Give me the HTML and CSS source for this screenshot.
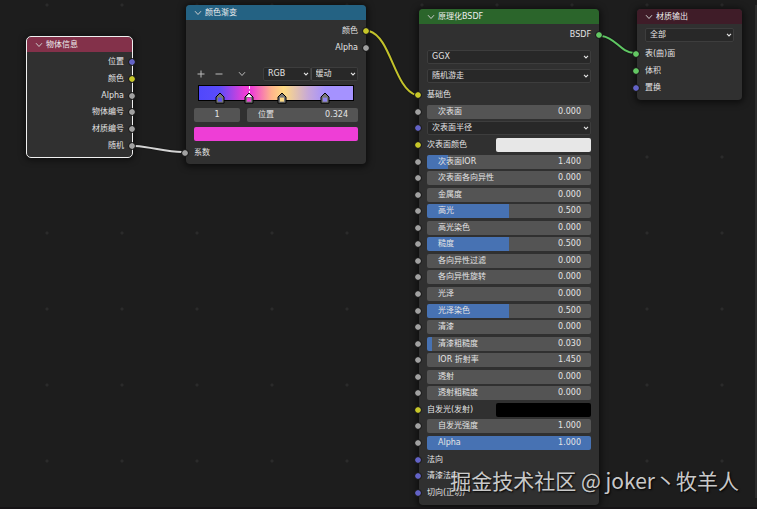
FILE: index.html
```
<!DOCTYPE html>
<html lang="zh-CN">
<head>
    <meta charset="UTF-8">
    <meta name="viewport" content="width=device-width, initial-scale=1.0">
    <title>材质节点</title>
    <link rel="stylesheet" href="styles.css">
</head>
<body>
    <svg class="symbols" width="0" height="0">
        <symbol id="chevron" viewBox="0 0 8 6"><path d="M1 1.2 4 4.5 7 1.2" fill="none" stroke="currentColor"/></symbol>
        <symbol id="arrow" viewBox="0 0 6 4"><path d="M1 0.8 3 2.9 5 0.8" fill="none" stroke="currentColor" stroke-width="1.1"/></symbol>
        <symbol id="stop" viewBox="0 0 10 12">
            <path d="M1 11.2V5L5 1 9 5v6.2z" fill="#777" stroke="#000"/>
            <path d="M3 5.6h4v4H3z" fill="currentColor"/>
        </symbol>
    </svg>

    <main class="canvas">
        <section class="node node-info selected">
            <header class="node-header red">
                <button class="collapse" aria-label="折叠"><svg class="chevron"><use href="#chevron"/></svg></button>
                <h2>物体信息</h2>
            </header>
            <div class="outputs">
                <div class="row out">位置<i class="socket vector"></i></div>
                <div class="row out">颜色<i class="socket color"></i></div>
                <div class="row out">Alpha<i class="socket"></i></div>
                <div class="row out">物体编号<i class="socket"></i></div>
                <div class="row out">材质编号<i class="socket"></i></div>
                <div class="row out">随机<i class="socket"></i></div>
            </div>
        </section>

        <section class="node node-ramp">
            <header class="node-header blue">
                <button class="collapse" aria-label="折叠"><svg class="chevron"><use href="#chevron"/></svg></button>
                <h2>颜色渐变</h2>
            </header>
            <div class="outputs">
                <div class="row out">颜色<i class="socket color"></i></div>
                <div class="row out">Alpha<i class="socket"></i></div>
            </div>
            <div class="ramp-body">
                <div class="toolbar">
                    <button class="tool" aria-label="添加"><svg viewBox="0 0 8 8"><path d="M4 0.5v7M0.5 4h7" stroke="currentColor"/></svg></button>
                    <button class="tool" aria-label="移除"><svg viewBox="0 0 8 8"><path d="M0.5 4h7" stroke="currentColor"/></svg></button>
                    <button class="tool menu" aria-label="工具"><svg class="chevron"><use href="#chevron"/></svg></button>
                    <div class="drop"><select aria-label="颜色模式"><option>RGB</option></select><svg><use href="#arrow"/></svg></div>
                    <div class="drop"><select aria-label="插值"><option>缓动</option></select><svg><use href="#arrow"/></svg></div>
                </div>
                <div class="ramp">
                    <svg class="stop" style="left: 13.5%; color: #5b55e8"><use href="#stop"/></svg>
                    <svg class="stop active" style="left: 32.4%; color: #ee3ed6" viewBox="0 0 10 12">
                        <path d="M1 11.2V5L5 1 9 5v6.2z" fill="#777" stroke="#000"/>
                        <path d="M2 5 5 1.8 8 5z" fill="#fff"/>
                        <path d="M3 5.6h4v4H3z" fill="currentColor"/>
                    </svg>
                    <svg class="stop" style="left: 54%; color: #ffdc84"><use href="#stop"/></svg>
                    <svg class="stop" style="left: 81.5%; color: #8f83f0"><use href="#stop"/></svg>
                </div>
                <div class="stop-fields">
                    <input class="index" type="text" value="1" aria-label="色标">
                    <label class="slider"><span>位置</span><input type="text" value="0.324"></label>
                </div>
                <input class="swatch" type="color" value="#ee3ed6" aria-label="色标颜色">
            </div>
            <div class="row in"><i class="socket"></i>系数</div>
        </section>

        <section class="node node-bsdf">
            <header class="node-header green">
                <button class="collapse" aria-label="折叠"><svg class="chevron"><use href="#chevron"/></svg></button>
                <h2>原理化BSDF</h2>
            </header>
            <div class="outputs">
                <div class="row out">BSDF<i class="socket shader"></i></div>
            </div>
            <div class="modes">
                <div class="drop"><select aria-label="分布"><option>GGX</option></select><svg><use href="#arrow"/></svg></div>
                <div class="drop"><select aria-label="次表面方法"><option>随机游走</option></select><svg><use href="#arrow"/></svg></div>
            </div>
            <div class="inputs">
                <div class="row in"><i class="socket color"></i>基础色</div>
                <div class="row in"><i class="socket"></i><label class="slider"><span>次表面</span><input type="text" value="0.000"></label></div>
                <div class="row in"><i class="socket vector"></i><div class="drop"><select aria-label="次表面半径"><option>次表面半径</option></select><svg><use href="#arrow"/></svg></div></div>
                <div class="row in"><i class="socket color"></i><label class="pick"><span>次表面颜色</span><input class="swatch" type="color" value="#e7e7e7"></label></div>
                <div class="row in"><i class="socket"></i><label class="slider" style="--fill: 13%"><span>次表面IOR</span><input type="text" value="1.400"></label></div>
                <div class="row in"><i class="socket"></i><label class="slider"><span>次表面各向异性</span><input type="text" value="0.000"></label></div>
                <div class="row in"><i class="socket"></i><label class="slider"><span>金属度</span><input type="text" value="0.000"></label></div>
                <div class="row in"><i class="socket"></i><label class="slider" style="--fill: 50%"><span>高光</span><input type="text" value="0.500"></label></div>
                <div class="row in"><i class="socket"></i><label class="slider"><span>高光染色</span><input type="text" value="0.000"></label></div>
                <div class="row in"><i class="socket"></i><label class="slider" style="--fill: 50%"><span>糙度</span><input type="text" value="0.500"></label></div>
                <div class="row in"><i class="socket"></i><label class="slider"><span>各向异性过滤</span><input type="text" value="0.000"></label></div>
                <div class="row in"><i class="socket"></i><label class="slider"><span>各向异性旋转</span><input type="text" value="0.000"></label></div>
                <div class="row in"><i class="socket"></i><label class="slider"><span>光泽</span><input type="text" value="0.000"></label></div>
                <div class="row in"><i class="socket"></i><label class="slider" style="--fill: 50%"><span>光泽染色</span><input type="text" value="0.500"></label></div>
                <div class="row in"><i class="socket"></i><label class="slider"><span>清漆</span><input type="text" value="0.000"></label></div>
                <div class="row in"><i class="socket"></i><label class="slider" style="--fill: 3%"><span>清漆粗糙度</span><input type="text" value="0.030"></label></div>
                <div class="row in"><i class="socket"></i><label class="slider"><span>IOR 折射率</span><input type="text" value="1.450"></label></div>
                <div class="row in"><i class="socket"></i><label class="slider"><span>透射</span><input type="text" value="0.000"></label></div>
                <div class="row in"><i class="socket"></i><label class="slider"><span>透射粗糙度</span><input type="text" value="0.000"></label></div>
                <div class="row in"><i class="socket color"></i><label class="pick"><span>自发光(发射)</span><input class="swatch" type="color" value="#000000"></label></div>
                <div class="row in"><i class="socket"></i><label class="slider"><span>自发光强度</span><input type="text" value="1.000"></label></div>
                <div class="row in"><i class="socket"></i><label class="slider" style="--fill: 100%"><span>Alpha</span><input type="text" value="1.000"></label></div>
                <div class="row in"><i class="socket vector"></i>法向</div>
                <div class="row in"><i class="socket vector"></i>清漆法向</div>
                <div class="row in"><i class="socket vector"></i>切向(正切)</div>
            </div>
        </section>

        <section class="node node-output">
            <header class="node-header maroon">
                <button class="collapse" aria-label="折叠"><svg class="chevron"><use href="#chevron"/></svg></button>
                <h2>材质输出</h2>
            </header>
            <div class="modes">
                <div class="drop"><select aria-label="目标"><option>全部</option></select><svg><use href="#arrow"/></svg></div>
            </div>
            <div class="outputs">
                <div class="row in"><i class="socket shader"></i>表(曲)面</div>
                <div class="row in"><i class="socket shader"></i>体积</div>
                <div class="row in"><i class="socket vector"></i>置换</div>
            </div>
        </section>

        <!-- links between sockets -->
        <svg class="links">
            <g class="casing">
                <path d="M135 146C152 147 166 152 182 152"/>
                <path d="M369 31C391 37 394 88 416 95"/>
                <path d="M602 36C616 38 620 52 634 53"/>
            </g>
            <path d="M135 146C152 147 166 152 182 152" stroke="#d4d4d4"/>
            <path d="M369 31C391 37 394 88 416 95" stroke="#c3c32b"/>
            <path d="M602 36C616 38 620 52 634 53" stroke="#5fc763"/>
        </svg>

        <p class="watermark">掘金技术社区 @ joker丶牧羊人</p>
    </main>
</body>
</html>
```
FILE: styles.css
```
* {
    box-sizing: border-box;
}
body {
    margin: 0;
    background: #1d1d1d;
    color: #e4e4e4;
    font: 8px/12px "DejaVu Sans", "Noto Sans CJK SC", sans-serif;
}
button, input, select {
    margin: 0;
    padding: 0;
    border: 0;
    background: none;
    color: inherit;
    font: inherit;
    appearance: none;
}
.symbols {
    position: absolute;
}
.canvas {
    position: relative;
    min-height: 100vh;
    overflow: hidden;
    background: radial-gradient(circle at 47px 5px, #2b2b2b 1px, transparent 2px) 0 0 / 75px 76px;
    border-bottom: 2px solid #161416;
}
/* edge of the side panel */
.canvas::after {
    content: "";
    position: absolute;
    top: 5px;
    right: 0;
    bottom: 9px;
    width: 2px;
    background: #2c2c2c;
}

/* nodes */
.node {
    position: absolute;
    background: #303030;
    border-radius: 4px;
    box-shadow: 0 1px 6px 2px rgba(0, 0, 0, 0.55);
}
.node-info {
    left: 27px;
    top: 37px;
    width: 105px;
    padding-bottom: 3px;
}
.node-ramp {
    left: 186px;
    top: 5px;
    width: 180px;
    padding-bottom: 3px;
}
.node-bsdf {
    left: 419px;
    top: 9px;
    width: 180px;
    padding-bottom: 4px;
}
.node-output {
    left: 637px;
    top: 9px;
    width: 105px;
    padding-bottom: 4px;
}
.selected {
    outline: 1px solid #f0f0f0;
}
.node-header {
    display: flex;
    align-items: center;
    height: 15px;
    padding-left: 8px;
    border-radius: 4px 4px 0 0;
}
.node-header h2 {
    margin: 0 0 0 3px;
    font-size: 8px;
    font-weight: normal;
    color: #eee;
}
.red { background: #83314a; }
.blue { background: #246283; }
.green { background: #2b652b; }
.maroon { background: #3f1c28; }
.collapse {
    display: flex;
    color: #ccc;
}
.chevron {
    width: 8px;
    height: 6px;
}

/* rows and sockets */
.row {
    position: relative;
    display: flex;
    align-items: center;
    padding: 0 8px;
}
.outputs {
    display: grid;
    grid-auto-rows: 17px;
    padding-top: 2px;
}
.node-info .outputs {
    grid-auto-rows: 1fr;
    height: 102px;
}
.out {
    justify-content: flex-end;
}
.socket {
    position: absolute;
    left: -5px;
    width: 8px;
    height: 8px;
    border: 1px solid #1c1c1c;
    border-radius: 50%;
    background: #a1a1a1;
    background-clip: padding-box;
    z-index: 1;
}
.out .socket {
    left: auto;
    right: -4px;
}
.vector { background-color: #6363c7; }
.color { background-color: #c7c729; }
.shader { background-color: #63c763; }

/* controls */
.drop {
    display: grid;
    align-items: center;
    flex: 1;
    min-width: 0;
    height: 14px;
    background: #282828;
    border: 1px solid #3d3d3d;
    border-radius: 2px;
}
.drop select {
    grid-area: 1 / 1;
    width: 100%;
    padding-left: 4px;
}
.drop svg {
    grid-area: 1 / 1;
    justify-self: end;
    width: 6px;
    height: 4px;
    margin-right: 1px;
    pointer-events: none;
}
.slider {
    --fill: 0%;
    display: flex;
    align-items: center;
    flex: 1;
    min-width: 0;
    height: 14px;
    padding: 0 10px 0 11px;
    background: linear-gradient(to right, #4772b3 var(--fill), #545454 var(--fill));
    border-radius: 2px;
}
.slider span {
    white-space: nowrap;
}
.slider input {
    flex: 1;
    min-width: 0;
    text-align: right;
}
.pick {
    display: flex;
    align-items: center;
    justify-content: space-between;
    flex: 1;
    min-width: 0;
}
.swatch {
    display: block;
    width: 100%;
    height: 14px;
    border-radius: 2px;
    overflow: hidden;
}
.pick .swatch {
    width: 58%;
}
.swatch::-webkit-color-swatch-wrapper {
    padding: 0;
}
.swatch::-webkit-color-swatch {
    border: 0;
}

/* color ramp */
.node-ramp .outputs {
    padding-top: 2px;
}
.ramp-body {
    padding: 11px 8px 3px;
}
.toolbar {
    display: flex;
    align-items: center;
    padding-left: 3px;
}
.tool {
    display: flex;
    justify-content: center;
    width: 8px;
    margin-right: 10px;
    color: #bbb;
}
.tool svg {
    width: 8px;
}
.menu {
    margin: 0 17px 0 5px;
}
.toolbar .drop + .drop {
    border-left-color: #4a4a4a;
}
.ramp {
    position: relative;
    height: 16px;
    margin: 4px 4px 7px;
    border: 1px solid #000;
    background: linear-gradient(to right, #5048fc 0, #5a4cfa 13%, #ee3ed6 30%, #ee3ed6 34%, #ffb48c 47%, #ffdc84 55%, #c6a8d8 71%, #a592ff 82%);
}
.stop {
    position: absolute;
    bottom: -4px;
    width: 10px;
    height: 12px;
    margin-left: -5px;
}
.ramp::before {
    content: "";
    position: absolute;
    left: 32.4%;
    height: 8px;
    border-left: 1px dashed #fff;
}
.stop-fields {
    display: flex;
    gap: 7px;
    margin-bottom: 5px;
}
.index {
    width: 46px;
    background: #545454;
    border-radius: 2px;
    text-align: center;
}
.node-ramp > .in {
    height: 17px;
}

/* shader inputs */
.modes {
    display: grid;
    gap: 5px;
    padding: 7px 8px 4px;
}
.node-output .modes {
    padding: 4px 8px 1px;
}
.inputs {
    display: grid;
    grid-template-columns: minmax(0, 1fr);
    grid-template-rows: repeat(25, 1fr);
    height: 414px;
}

.links {
    position: absolute;
    inset: 0;
    width: 100%;
    height: 100%;
    fill: none;
    stroke-width: 2;
    pointer-events: none;
}
.casing {
    stroke: #181818;
    stroke-width: 4;
}
.watermark {
    position: absolute;
    right: 18px;
    bottom: 12px;
    margin: 0;
    color: rgba(235, 235, 235, 0.85);
    font: 21px/30px "Noto Sans CJK SC", sans-serif;
    text-shadow: 1px 1px 2px #000;
    white-space: nowrap;
}
```
